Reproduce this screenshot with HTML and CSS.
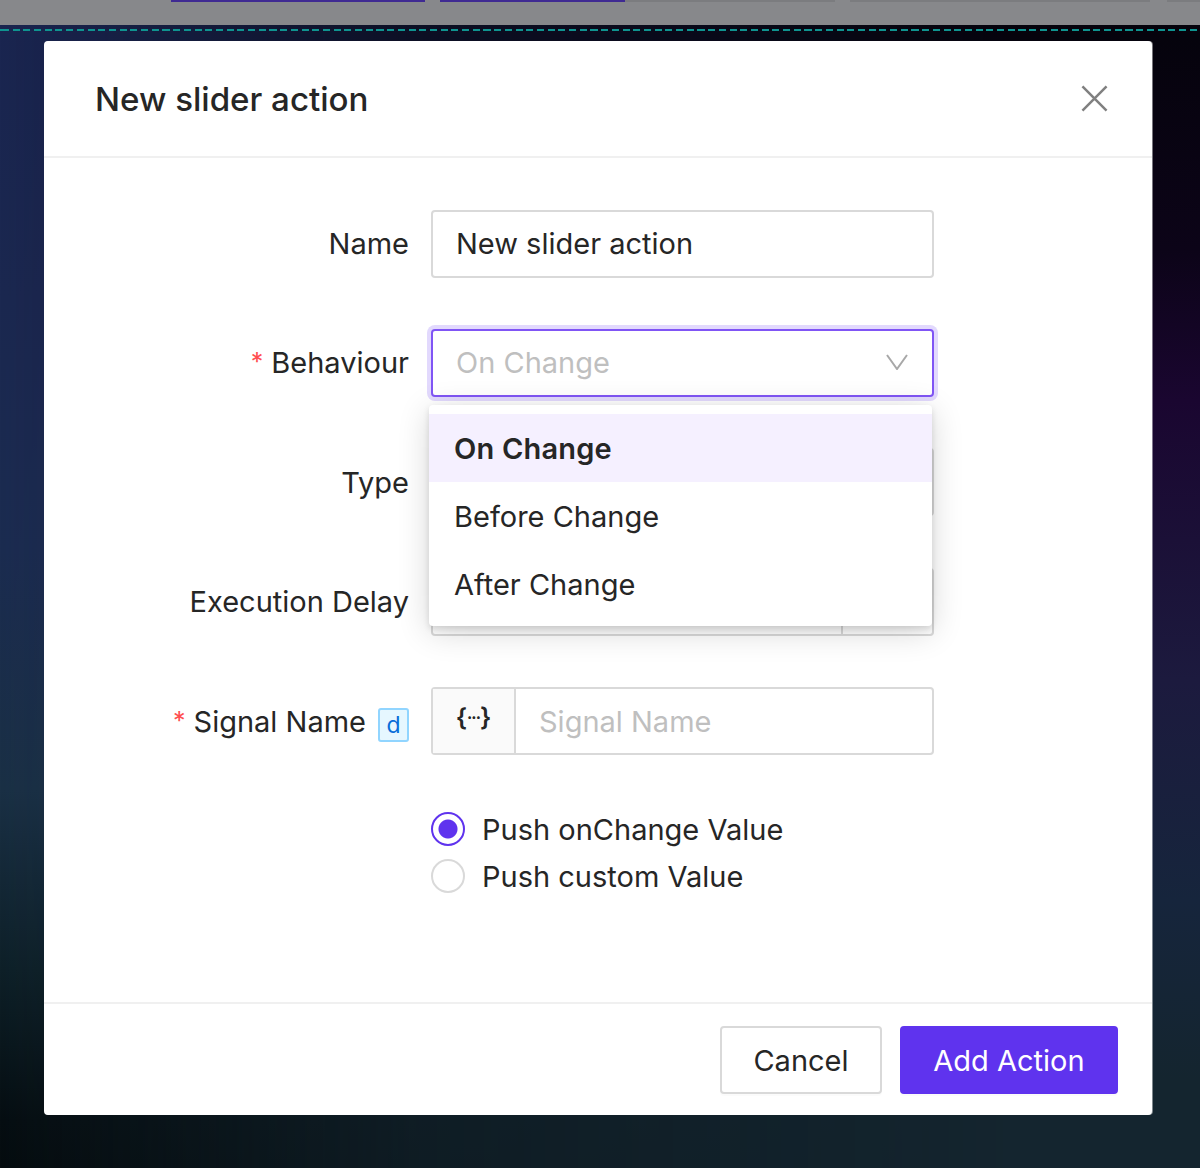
FILE: index.html
```html
<!DOCTYPE html>
<html lang="en">
<head>
<meta charset="utf-8">
<title>New slider action</title>
<link rel="stylesheet" href="styles.css">
</head>
<body>
<div class="topbar">
  <span class="tab tab-a"></span>
  <span class="tab tab-b"></span>
  <span class="tab tab-c"></span>
  <span class="tab tab-d"></span>
  <span class="tab tab-e"></span>
</div>
<div class="dash"></div>
<main class="modal">
  <header class="modal-head">
    <h1 class="modal-title">New slider action</h1>
    <svg class="close" viewBox="0 0 28 28" width="27" height="27"><path d="M1.5 1.5 L26.5 26.5 M26.5 1.5 L1.5 26.5" fill="none" stroke="#808080" stroke-width="2.6"/></svg>
  </header>
  <section class="modal-body">
    <div class="row">
      <label class="label">Name</label>
      <div class="field"><span class="value">New slider action</span></div>
    </div>
    <div class="row">
      <label class="label"><span class="req">*</span>Behaviour</label>
      <div class="field focus">
        <span class="placeholder">On Change</span>
        <svg class="chev" viewBox="0 0 22 16" width="22" height="16"><path d="M1 1 L11 15 L21 1" fill="none" stroke="#a8a8a8" stroke-width="2"/></svg>
      </div>
      <div class="menu">
        <div class="opt active">On Change</div>
        <div class="opt">Before Change</div>
        <div class="opt">After Change</div>
      </div>
    </div>
    <div class="row">
      <label class="label">Type</label>
      <div class="field"></div>
    </div>
    <div class="row">
      <label class="label">Execution Delay</label>
      <div class="field split"><span class="split-main"></span><span class="split-add"></span></div>
    </div>
    <div class="row">
      <label class="label"><span class="req">*</span>Signal Name<span class="badge">d</span></label>
      <div class="field group">
        <span class="addon">{<span class="dots">···</span>}</span>
        <span class="placeholder ph-in">Signal Name</span>
      </div>
    </div>
    <div class="radios">
      <div class="radio-row"><span class="radio on"></span><span class="value">Push onChange Value</span></div>
      <div class="radio-row"><span class="radio"></span><span class="value">Push custom Value</span></div>
    </div>
  </section>
  <footer class="modal-foot">
    <button class="btn">Cancel</button>
    <button class="btn primary">Add Action</button>
  </footer>
</main>
</body>
</html>
```
FILE: styles.css
```css
* { box-sizing: border-box; }
html, body { margin: 0; height: 1168px; overflow: hidden; }
body {
  position: relative;
  font-family: Inter, "Liberation Sans", sans-serif;
  color: #262626;
  font-size: 29px;
  display: flex;
  flex-direction: column;
  background: linear-gradient(180deg, #1a2550 0, #1b2850 300px, #1b2c50 550px, #1a3045 790px, #0e2028 970px, #060e12 1120px, #050c0f 1168px);
}
body::before {
  content: "";
  position: absolute;
  inset: 25px 0 0 0;
  background: linear-gradient(180deg, #05030c 0, #0c0418 225px, #1a0630 375px, #1c1a3e 655px, #16253c 875px, #14252f 1055px, #14252f 1143px);
  -webkit-mask-image: linear-gradient(90deg, transparent 0, rgba(0,0,0,.65) 35%, #000 85%);
  mask-image: linear-gradient(90deg, transparent 0, rgba(0,0,0,.65) 35%, #000 85%);
}
.topbar {
  position: relative;
  height: 25px;
  flex: none;
  background: #87888b;
  display: flex;
  align-items: flex-start;
  padding-left: 171px;
}
.tab { height: 2px; background: #7b7c7f; display: block; flex: none; }
.tab-a { width: 254px; background: #3f2a92; }
.tab-b { width: 185px; margin-left: 15px; background: #3f2a92; }
.tab-c { width: 210px; }
.tab-d { width: 300px; margin-left: 15px; }
.tab-e { width: 33px; margin-left: 17px; }
.dash {
  position: relative;
  flex: none;
  height: 2px;
  margin-top: 4px;
  background: repeating-linear-gradient(90deg, #0f9490 0 7px, transparent 7px 10.7px);
  background-position: 2px 0;
}
.modal {
  position: relative;
  flex: none;
  width: 1108px;
  height: 1074px;
  margin: 10px 0 0 44px;
  background: #fff;
  border-radius: 4px;
  box-shadow: 1px 0 0 rgba(255,255,255,.45);
  display: flex;
  flex-direction: column;
}
.modal-head {
  flex: none;
  height: 117px;
  padding: 0 44px 0 51px;
  border-bottom: 2px solid #f0f0f0;
  display: flex;
  align-items: center;
  justify-content: space-between;
}
.modal-title { margin: 0; font-size: 33.1px; font-weight: 500; }
.modal-body {
  flex: 1;
  padding-top: 51.5px;
  display: flex;
  flex-direction: column;
  gap: 51.4px;
}
.row { position: relative; display: flex; align-items: center; height: 68px; }
.label {
  flex: none;
  width: 365px;
  margin-right: 22px;
  display: flex;
  align-items: center;
  justify-content: flex-end;
}
.req { color: #ff4d4f; font-size: 25px; margin-right: 8px; line-height: 1; }
.badge {
  width: 31px;
  height: 34px;
  margin: 7px 0 0 12px;
  border: 2px solid #91d5ff;
  border-radius: 3px;
  background: #e6f7ff;
  color: #096dd9;
  font-size: 23px;
  line-height: 31px;
  text-align: center;
}
.field {
  width: 503px;
  height: 68px;
  border: 2px solid #d9d9d9;
  border-radius: 4px;
  background: #fff;
  display: flex;
  align-items: center;
  padding: 0 23px;
}
.focus {
  border-color: #8055f5;
  box-shadow: 0 0 0 4px #e2d9fd;
  justify-content: space-between;
  padding-right: 24px;
}
.chev { margin-bottom: 2px; }
.placeholder { color: #bfbfbf; }
.split { padding: 0; }
.split-main { flex: 1; height: 100%; border-right: 2px solid #d9d9d9; }
.split-add { width: 89px; }
.group { padding: 0; }
.addon {
  flex: none;
  width: 83px;
  height: 100%;
  background: #fafafa;
  border-right: 2px solid #d9d9d9;
  display: flex;
  align-items: center;
  justify-content: center;
  font-size: 25px;
  font-weight: 600;
  padding-bottom: 8px;
}
.dots { font-size: 15px; font-weight: 800; letter-spacing: -1px; }
.ph-in { margin-left: 23px; }
.menu {
  position: absolute;
  z-index: 2;
  left: 385px;
  top: 76px;
  width: 503px;
  padding: 9px 0 8px;
  background: #fff;
  border-radius: 4px;
  box-shadow: 0 6px 32px rgba(0,0,0,.16), 0 3px 6px rgba(0,0,0,.12);
}
.opt { height: 68px; padding: 2px 25px 0; display: flex; align-items: center; }
.opt.active { background: #f5f0ff; font-weight: 600; letter-spacing: .2px; }
.radios { margin: 1.9px 0 0 387px; display: flex; flex-direction: column; gap: 5px; }
.radio-row { display: flex; align-items: center; height: 42px; gap: 17px; }
.radio {
  width: 34px;
  height: 34px;
  border: 2px solid #d9d9d9;
  border-radius: 50%;
  background: #fff;
  flex: none;
}
.radio.on {
  border-color: #5f33ee;
  background: radial-gradient(circle, #5f33ee 0 9px, #fff 10px);
}
.modal-foot {
  flex: none;
  height: 113px;
  border-top: 2px solid #f0f0f0;
  padding: 22px 34px 0 0;
  display: flex;
  justify-content: flex-end;
  align-items: flex-start;
  gap: 18px;
}
.btn {
  font: inherit;
  color: inherit;
  height: 68px;
  width: 162px;
  border: 2px solid #d9d9d9;
  border-radius: 4px;
  background: #fff;
  box-shadow: 0 2px 0 rgba(0,0,0,.015);
  padding: 0;
}
.btn.primary { width: 218px; background: #5f33ee; border-color: #5f33ee; color: #fff; }
```
